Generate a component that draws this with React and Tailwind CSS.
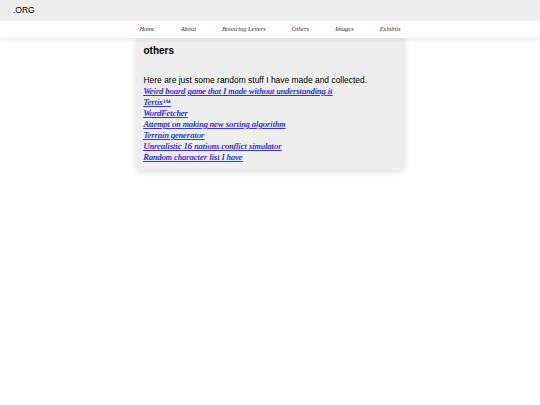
export default function App() {
    const navItems = ['Home', 'About', 'Bouncing Letters', 'Others', 'Images', 'Exhibits'];
    const links = [
        'Weird board game that I made without understanding it',
        'Tertis™',
        'WordFetcher',
        'Attempt on making new sorting algorithm',
        'Terrain generator',
        'Unrealistic 16 nations conflict simulator',
        'Random character list I have',
    ];

    return (
        <div className="min-h-screen bg-white font-['Liberation_Sans',Arial,sans-serif] text-black">
            <header className="h-[21px] bg-[#eeeeee] flex items-center pl-[13px] text-[8.5px]">
                .ORG
            </header>

            <nav className="relative z-10 h-[17px] pb-[2px] bg-white shadow-[0_2px_4px_rgba(0,0,0,0.08)] flex items-center justify-center gap-[26px] font-['Liberation_Serif',serif] italic text-[6.4px] text-[#333]">
                {navItems.map((item) => (
                    <a key={item} href="#">{item}</a>
                ))}
            </nav>

            <main className="w-[269px] mx-auto bg-[#eeeeee] rounded-b-[5px] shadow-[0_2px_6px_rgba(0,0,0,0.12)] px-2 pt-[7px] pb-[7px]">
                <h2 className="text-[10px] font-bold leading-[12px]">others</h2>
                <p className="mt-[18px] text-[8.45px] leading-[11px]">
                    Here are just some random stuff I have made and collected.
                </p>
                <ul className="font-['Liberation_Serif',serif] italic text-[8.5px] leading-[11px]">
                    {links.map((link) => (
                        <li key={link}>
                            <a href="#" className="text-[#3535ea] underline [text-shadow:0_0_0.2px_#3535ea]">{link}</a>
                        </li>
                    ))}
                </ul>
            </main>
        </div>
    );
}
